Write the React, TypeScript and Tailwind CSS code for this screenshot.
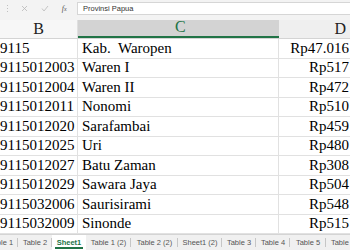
import React from "react";

const rows: [string, string, string][] = [
  ["9115", "Kab.  Waropen", "Rp47.016"],
  ["9115012003", "Waren I", "Rp517"],
  ["9115012004", "Waren II", "Rp472"],
  ["9115012011", "Nonomi", "Rp510"],
  ["9115012020", "Sarafambai", "Rp459"],
  ["9115012025", "Uri", "Rp480"],
  ["9115012027", "Batu Zaman", "Rp308"],
  ["9115012029", "Sawara Jaya", "Rp504"],
  ["9115032006", "Saurisirami", "Rp548"],
  ["9115032009", "Sinonde", "Rp515"],
];

const tabs: { label: string; w: string; active?: boolean }[] = [
  { label: "Table 1", w: "w-[34px] ml-[-16px]" },
  { label: "Table 2", w: "w-[34px]" },
  { label: "Sheet1", w: "w-[34px]", active: true },
  { label: "Table 1 (2)", w: "w-[45px]" },
  { label: "Table 2 (2)", w: "w-[47px]" },
  { label: "Sheet1 (2)", w: "w-[44px]" },
  { label: "Table 3", w: "w-[34px]" },
  { label: "Table 4", w: "w-[34px]" },
  { label: "Table 5", w: "w-[36px]" },
  { label: "Table 6", w: "w-[34px]" },
];

export default function App() {
  return (
    <div className="w-[350px] h-[250px] overflow-hidden bg-white flex flex-col">
      {/* formula bar */}
      <div className="h-[20px] shrink-0 bg-[#f3f3f3] flex items-start pt-[2px]">
        <div className="w-[15px] h-[13px] flex flex-col items-center justify-center gap-[2px]">
          <span className="w-[1px] h-[1px] bg-[#c0c0c0]" />
          <span className="w-[1px] h-[1px] bg-[#c0c0c0]" />
          <span className="w-[1px] h-[1px] bg-[#c0c0c0]" />
        </div>
        <div className="w-[58px] h-[13px] flex items-center justify-around text-[#b5b5b5]">
          <svg width="7" height="7" viewBox="0 0 7 7">
            <path d="M1 1L6 6M6 1L1 6" stroke="#b8b8b8" strokeWidth="0.8" />
          </svg>
          <svg width="8" height="7" viewBox="0 0 8 7">
            <path d="M1 3.5L3 6L7 1" stroke="#b8b8b8" strokeWidth="0.8" fill="none" />
          </svg>
          <span className="text-[8px] italic text-[#555]" style={{ fontFamily: '"Liberation Serif", serif' }}>
            f<span className="text-[6px]">x</span>
          </span>
        </div>
        <div
          className="ml-[4px] flex-1 h-[13px] bg-white border border-[#d6d6d6] border-r-0 flex items-center pl-[5px] text-[7.5px] text-[#333]"
          style={{ fontFamily: '"Liberation Sans", Arial, sans-serif' }}
        >
          Provinsi Papua
        </div>
      </div>

      {/* column headers */}
      <div
        className="h-[19px] shrink-0 flex border-b border-[#d4d4d4] text-[16px]"
        style={{ fontFamily: '"Liberation Serif", "Times New Roman", serif' }}
      >
        <div className="w-[78px] bg-[#f7f7f7] border-r border-[#e0e0e0] flex items-end justify-center pb-[1px] leading-none text-[#222]">
          B
        </div>
        <div className="w-[201px] bg-[#d3d3d3] border-b-2 border-[#217346] flex items-end pl-[97px] pb-[1px] leading-none text-[#217346]">
          C
        </div>
        <div className="flex-1 bg-[#efefef] flex items-end justify-end pr-[4px] pb-[1px] leading-none text-[#222]">
          D
        </div>
      </div>

      {/* grid */}
      <div
        className="flex-1 flex flex-col text-[15px] text-black"
        style={{ fontFamily: '"Liberation Serif", "Times New Roman", serif' }}
      >
        {rows.map((r, i) => (
          <div key={i} className="h-[19.5px] shrink-0 flex border-b border-[#e1e1e1]">
            <div className="w-[78px] border-r border-[#e1e1e1] flex items-end leading-none pb-[2px] overflow-hidden whitespace-nowrap">
              {r[0]}
            </div>
            <div className="w-[201px] border-r border-[#e1e1e1] flex items-end leading-none pb-[2px] pl-[4px] whitespace-pre">
              {r[1]}
            </div>
            <div className="flex-1 flex items-end justify-end leading-none pb-[2px] pr-[1px] whitespace-nowrap">
              {r[2]}
            </div>
          </div>
        ))}
      </div>

      {/* sheet tabs */}
      <div
        className="h-[16px] shrink-0 bg-[#f0f0f0] border-t border-[#d4d4d4] flex items-stretch overflow-hidden text-[7.5px] text-[#555]"
        style={{ fontFamily: '"Liberation Sans", Arial, sans-serif' }}
      >
        {tabs.map((t, i) => (
          <div
            key={i}
            className={
              t.active
                ? `${t.w} shrink-0 bg-white flex items-center justify-center relative font-bold text-[#217346]`
                : `${t.w} shrink-0 flex items-center justify-center relative`
            }
          >
            <span className="whitespace-nowrap">{t.label}</span>
            {t.active ? (
              <span className="absolute left-[3px] right-[3px] bottom-[1px] h-[2px] bg-[#217346]" />
            ) : (
              <span className="absolute right-0 top-[3px] bottom-[3px] w-[1px] bg-[#c6c6c6]" />
            )}
          </div>
        ))}
      </div>
    </div>
  );
}
